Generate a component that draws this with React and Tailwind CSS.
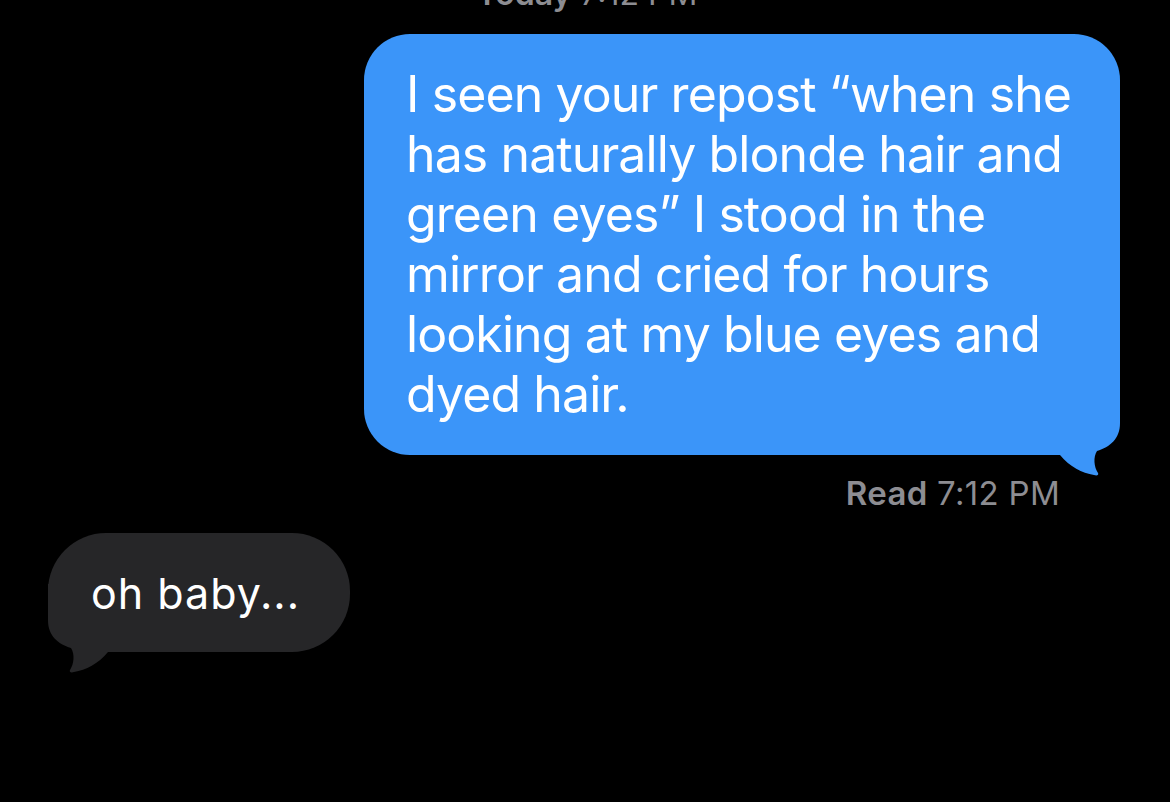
import React from "react";

const lines = [
  "I seen your repost \u201cwhen she",
  "has naturally blonde hair and",
  "green eyes\u201d I stood in the",
  "mirror and cried for hours",
  "looking at my blue eyes and",
  "dyed hair.",
];

const Tail = ({ color, flip }) => (
  <svg
    className={`absolute bottom-[-22px] w-[70px] h-[90px] ${flip ? "left-0 -scale-x-100" : "right-0"}`}
    viewBox="0 0 70 90"
  >
    <path
      d="M0,0 H70 V36 C70,52 60,60 47,64 C43,70 44,80 48,86 C49,88 47,89 44,88 C32,86 20,80 10,68 L0,68 Z"
      fill={color}
    />
  </svg>
);

const App = () => {
  return (
    <div className="w-[1170px] h-[802px] bg-black overflow-hidden font-['Inter',sans-serif] flex flex-col">
      <p className="mt-[-24px] h-[36px] leading-[36px] text-[32px] text-[#8d8d92] text-center pl-[4px]">
        <span className="font-semibold">Today</span> 7:12 PM
      </p>

      <div className="flex justify-end pr-[50px] mt-[22px]">
        <div className="relative w-[756px] bg-[#3b95f9] rounded-[46px] pl-[42px] pt-[30px] pb-[31px]">
          <Tail color="#3b95f9" />
          <div className="relative text-white text-[50px] leading-[60px] tracking-[-0.9px]">
            {lines.map((line, i) => (
              <div key={i} className="whitespace-nowrap">{line}</div>
            ))}
          </div>
        </div>
      </div>

      <p className="mt-[20px] pr-[110px] text-right text-[33px] leading-[36px] tracking-[0.3px] text-[#8d8d92]">
        <span className="font-semibold">Read</span> 7:12 PM
      </p>

      <div className="flex pl-[48px] mt-[22px]">
        <div className="relative w-[302px] h-[119px] bg-[#262628] rounded-[58px] pl-[43px] flex items-center">
          <Tail color="#262628" flip />
          <span className="relative text-white text-[43px] leading-[48px] tracking-[1px]">oh baby...</span>
        </div>
      </div>
    </div>
  );
};

export default App;
